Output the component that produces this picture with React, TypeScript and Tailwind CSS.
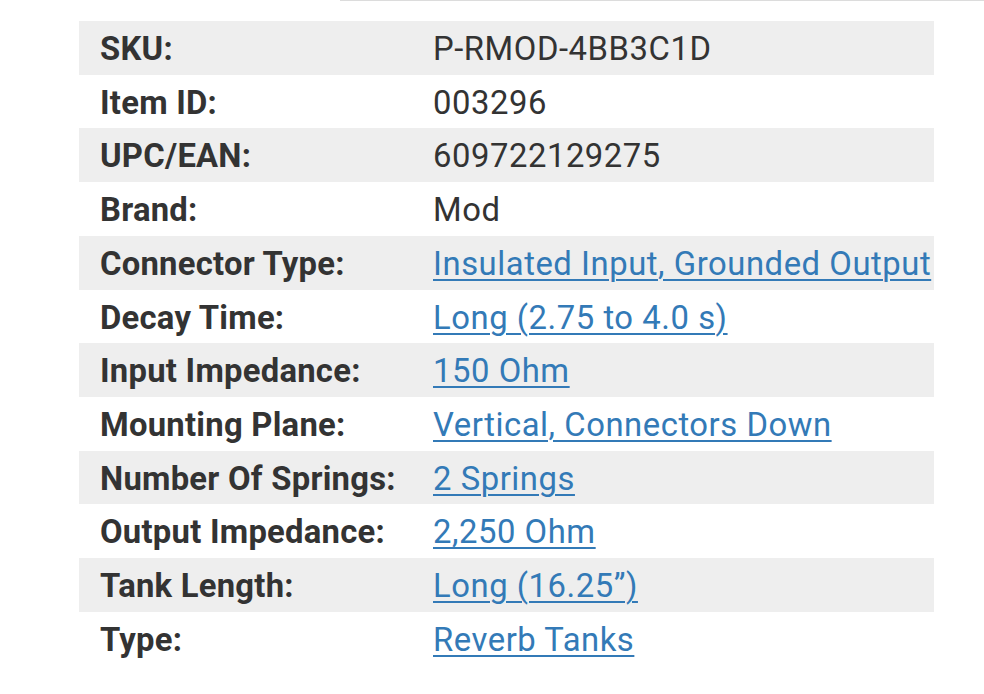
import React from "react";

type Row = { label: string; value: string; link?: boolean };

const rows: Row[] = [
  { label: "SKU:", value: "P-RMOD-4BB3C1D" },
  { label: "Item ID:", value: "003296" },
  { label: "UPC/EAN:", value: "609722129275" },
  { label: "Brand:", value: "Mod" },
  { label: "Connector Type:", value: "Insulated Input, Grounded Output", link: true },
  { label: "Decay Time:", value: "Long (2.75 to 4.0 s)", link: true },
  { label: "Input Impedance:", value: "150 Ohm", link: true },
  { label: "Mounting Plane:", value: "Vertical, Connectors Down", link: true },
  { label: "Number Of Springs:", value: "2 Springs", link: true },
  { label: "Output Impedance:", value: "2,250 Ohm", link: true },
  { label: "Tank Length:", value: "Long (16.25\u201D)", link: true },
  { label: "Type:", value: "Reverb Tanks", link: true },
];

export default function App() {
  return (
    <div
      className="w-[984px] h-[694px] bg-white overflow-hidden text-[#333]"
      style={{ fontFamily: "Roboto, 'Liberation Sans', sans-serif" }}
    >
      <div className="flex h-[21px]">
        <div className="ml-[340px] flex-1 h-px bg-[#dcdcdc]" />
      </div>
      <div className="ml-[79px] w-[855px] flex flex-col">
        {rows.map((r, i) => (
          <div
            key={r.label}
            className={`grid grid-cols-[354px_1fr] items-center h-[53.73px] pt-[3px] text-[32.8px] leading-none whitespace-nowrap ${
              i % 2 === 0 ? "bg-[#eeeeee]" : "bg-white"
            }`}
          >
            <div className="pl-[21px] font-bold tracking-[0.25px]">{r.label}</div>
            <div className="tracking-[0.55px]">
              {r.link ? (
                <a href="#" className="text-[#337ab7] underline underline-offset-[4px] decoration-[2px]">
                  {r.value}
                </a>
              ) : (
                <span>{r.value}</span>
              )}
            </div>
          </div>
        ))}
      </div>
    </div>
  );
}
